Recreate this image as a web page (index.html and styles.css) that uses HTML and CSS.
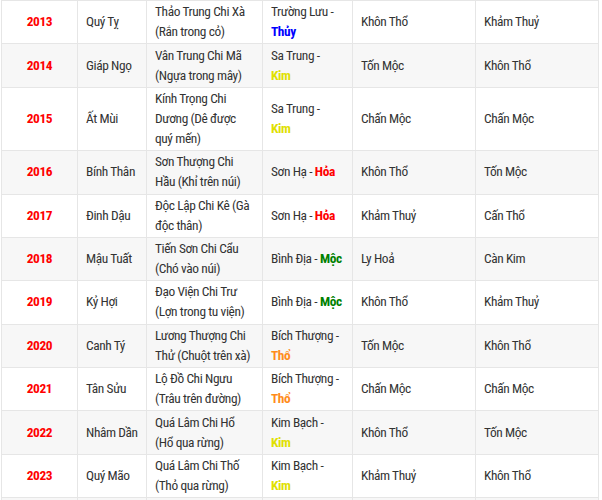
FILE: index.html
```html
<!DOCTYPE html>
<html lang="vi">
<head>
<meta charset="utf-8">
<link rel="stylesheet" href="styles.css">
</head>
<body>
<div class="wrap">
<table class="tbl">
<colgroup>
<col class="c1"><col class="c2"><col class="c3"><col class="c4"><col class="c5"><col class="c6">
</colgroup>
<tbody>
<tr><td class="yr">2013</td><td>Quý Tỵ</td><td>Thảo Trung Chi Xà (Rắn trong cỏ)</td><td>Trường Lưu - <b class="thuy">Thủy</b></td><td>Khôn Thổ</td><td>Khảm Thuỷ</td></tr>
<tr class="alt"><td class="yr">2014</td><td>Giáp Ngọ</td><td>Vân Trung Chi Mã (Ngựa trong mây)</td><td>Sa Trung -<br><b class="kim">Kim</b></td><td>Tốn Mộc</td><td>Khôn Thổ</td></tr>
<tr><td class="yr">2015</td><td>Ất Mùi</td><td>Kính Trọng Chi Dương (Dê được quý mến)</td><td>Sa Trung -<br><b class="kim">Kim</b></td><td>Chấn Mộc</td><td>Chấn Mộc</td></tr>
<tr class="alt"><td class="yr">2016</td><td>Bính Thân</td><td>Sơn Thượng Chi Hầu (Khỉ trên núi)</td><td>Sơn Hạ - <b class="hoa">Hỏa</b></td><td>Khôn Thổ</td><td>Tốn Mộc</td></tr>
<tr><td class="yr">2017</td><td>Đinh Dậu</td><td>Độc Lập Chi Kê (Gà độc thân)</td><td>Sơn Hạ - <b class="hoa">Hỏa</b></td><td>Khảm Thuỷ</td><td>Cấn Thổ</td></tr>
<tr class="alt"><td class="yr">2018</td><td>Mậu Tuất</td><td>Tiến Sơn Chi Cẩu (Chó vào núi)</td><td>Bình Địa - <b class="moc">Mộc</b></td><td>Ly Hoả</td><td>Càn Kim</td></tr>
<tr><td class="yr">2019</td><td>Kỷ Hợi</td><td>Đạo Viện Chi Trư (Lợn trong tu viện)</td><td>Bình Địa - <b class="moc">Mộc</b></td><td>Khôn Thổ</td><td>Khảm Thuỷ</td></tr>
<tr class="alt"><td class="yr">2020</td><td>Canh Tý</td><td>Lương Thượng Chi Thử (Chuột trên xà)</td><td>Bích Thượng - <b class="tho">Thổ</b></td><td>Tốn Mộc</td><td>Khôn Thổ</td></tr>
<tr><td class="yr">2021</td><td>Tân Sửu</td><td>Lộ Đồ Chi Ngưu (Trâu trên đường)</td><td>Bích Thượng - <b class="tho">Thổ</b></td><td>Chấn Mộc</td><td>Chấn Mộc</td></tr>
<tr class="alt"><td class="yr">2022</td><td>Nhâm Dần</td><td>Quá Lâm Chi Hổ (Hổ qua rừng)</td><td>Kim Bạch - <b class="kim">Kim</b></td><td>Khôn Thổ</td><td>Tốn Mộc</td></tr>
<tr><td class="yr">2023</td><td>Quý Mão</td><td>Quá Lâm Chi Thố (Thỏ qua rừng)</td><td>Kim Bạch - <b class="kim">Kim</b></td><td>Khảm Thuỷ</td><td>Khôn Thổ</td></tr>
<tr class="alt"><td class="yr">2024</td><td>Giáp Thìn</td><td>Phú Đăng Chi Long (Rồng đèn lửa)</td><td>Phú Đăng - <b class="hoa">Hỏa</b></td><td>Tốn Mộc</td><td>Khôn Thổ</td></tr>
</tbody>
</table>
</div>
</body>
</html>
```
FILE: styles.css
```css
html, body {
  margin: 0;
  padding: 0;
  background: #ffffff;
}
.wrap {
  padding-left: 1px;
}
.tbl {
  border-collapse: collapse;
  table-layout: fixed;
  width: 598px;
  font-family: "Roboto Condensed", Roboto, sans-serif;
  font-stretch: condensed;
  font-size: 13.4px;
  letter-spacing: -0.4px;
  line-height: 20px;
  color: #333333;
}
.c1 { width: 76px; }
.c2 { width: 69px; }
.c3 { width: 116px; }
.c4 { width: 90px; }
.c5 { width: 123px; }
.c6 { width: 123px; }
.tbl td {
  border: 1px solid #e6e6e6;
  padding: 1.2px 8px;
  vertical-align: middle;
  text-align: left;
}
.tbl tr.alt td {
  background: #f7f7f7;
}
.tbl td.yr {
  text-align: center;
  color: #ff0000;
  font-weight: bold;
}
.thuy { color: #0000ff; }
.kim { color: #e0e000; }
.hoa { color: #ff0000; }
.moc { color: #008000; }
.tho { color: #ff8c1a; }
```
